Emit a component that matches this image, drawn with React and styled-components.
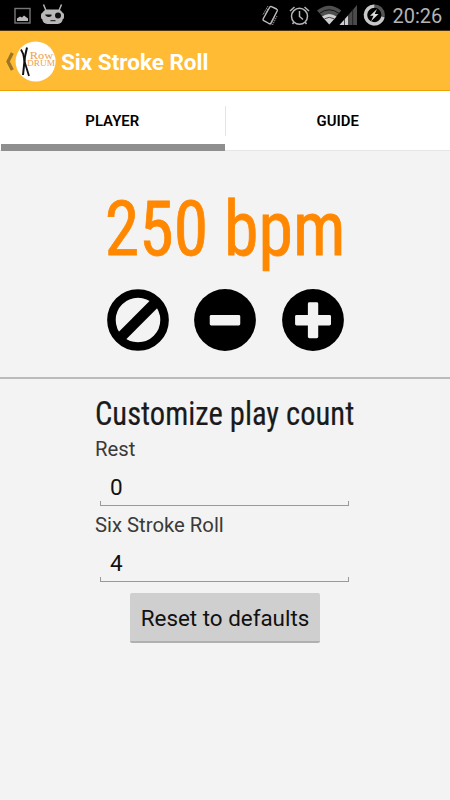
import React from "react";
import styled, { createGlobalStyle } from "styled-components";

const GlobalStyle = createGlobalStyle`
  * {
    box-sizing: border-box;
  }
  body {
    margin: 0;
    background: #f3f3f3;
    font-family: Roboto, "Liberation Sans", sans-serif;
  }
`;
const Screen = styled.div`
  width: 450px;
  height: 800px;
  display: flex;
  flex-direction: column;
  overflow: hidden;
  background: #f3f3f3;
`;
const StatusBar = styled.div`
  height: 31px;
  flex: none;
  display: flex;
  background: #000;
  border-bottom: 1px solid #4b3510;
`;
const Clock = styled.div`
  margin-left: 6.5px;
  font-size: 20px;
  line-height: 32px;
  color: #b4b4b4;
`;
const AppBar = styled.header`
  height: 60px;
  flex: none;
  display: flex;
  align-items: center;
  background: #ffbb33;
  border-bottom: 1px solid #f0a000;
`;
const Title = styled.h1`
  margin: 2px 0 0 5px;
  font-size: 22.5px;
  line-height: 28px;
  font-weight: 700;
  white-space: nowrap;
  color: #fff;
`;
const Tabs = styled.nav`
  height: 60px;
  flex: none;
  display: flex;
  align-items: flex-start;
  background: #fff;
  border-bottom: 1px solid #e6e6e6;
`;
const Tab = styled.div`
  width: 225px;
  height: 60px;
  font-size: 14.9px;
  line-height: 61px;
  font-weight: 600;
  text-align: center;
  color: #000;
  background: ${(p) =>
    p.$active
      ? "linear-gradient(#8f8f8f, #8f8f8f) 1px 53px / 224px 7px no-repeat"
      : "none"};
`;
const TabDivider = styled.div`
  width: 1px;
  height: 30px;
  margin-top: 15px;
  background: #e4e4e4;
`;
const Player = styled.section`
  height: 228px;
  flex: none;
  padding-top: 40px;
  display: flex;
  flex-direction: column;
  align-items: center;
  border-bottom: 2px solid #bbb;
`;
const Bpm = styled.div`
  font-size: 76px;
  line-height: 76px;
  font-weight: 400;
  font-stretch: 75%;
  white-space: nowrap;
  color: #ff8800;
  -webkit-text-stroke: 0.8px #ff8800;
  transform: scaleX(0.918);
`;
const Controls = styled.div`
  margin-top: 22px;
  display: flex;
  gap: 25.5px;
`;
const RoundButton = styled.button`
  width: 62px;
  height: 62px;
  padding: 0;
  border: 0;
  background: none;
  svg {
    display: block;
  }
`;
const Customize = styled.section`
  padding: 15px 0 0 95px;
  display: flex;
  flex-direction: column;
  align-items: flex-start;
`;
const Heading = styled.h2`
  margin: 0 0 3px;
  font-size: 33px;
  line-height: 40px;
  font-weight: 400;
  font-stretch: 75%;
  white-space: nowrap;
  color: #1a1a1a;
  -webkit-text-stroke: 0.2px #1a1a1a;
  transform: scaleX(0.927);
  transform-origin: left;
`;
const Label = styled.label`
  height: 24px;
  font-size: 20.3px;
  line-height: 25px;
  color: #3a3a3a;
`;
const Field = styled.div`
  width: 249px;
  height: 45px;
  margin: 0 0 7px 5px;
  padding: 0 10px;
  display: flex;
  flex-direction: column;
  justify-content: flex-end;
  font-size: 22.5px;
  line-height: 38px;
  color: #111;
  background:
    linear-gradient(#999, #999) 0 100% / 100% 1px no-repeat,
    linear-gradient(#999, #999) 0 100% / 1px 5px no-repeat,
    linear-gradient(#999, #999) 100% 100% / 1px 5px no-repeat;
`;
const ResetButton = styled.button`
  width: 190px;
  height: 50px;
  margin: 4px 0 0 35px;
  padding: 2px 0 0;
  border: 0;
  border-bottom: 2px solid #b0b0b0;
  border-radius: 2px;
  background: #cfcfcf;
  font-family: inherit;
  font-size: 22.4px;
  white-space: nowrap;
  color: #111;
`;

function StatusIcons() {
  return (
    <svg width="386" height="30" viewBox="0 0 386 30">
      {/* picture */}
      <rect x="15" y="8.500" width="15" height="14.500" fill="none" stroke="#777" strokeWidth="1.400" />
      <path d="M17 21v-2.500l3-2 2 1 2-2 4 3V21z" fill="#bbb" />
      {/* android head */}
      <path d="M43.500 4.500l2.500 6M61.500 4.500l-2.500 6" stroke="#b5b5b5" strokeWidth="1.500" />
      <rect x="42.300" y="9.500" width="20.400" height="14.500" rx="5" fill="#b8b8b8" />
      <rect x="41" y="12.500" width="23" height="7" rx="2.500" fill="#b8b8b8" />
      <circle cx="58" cy="15.500" r="3" fill="#111" />
      <path d="M45 14.500h6.500v1.500q-3 2-5.500 0z" fill="#111" />
      <path d="M50.500 20.700h5" stroke="#111" strokeWidth="1" />
      {/* rotating phone */}
      <path d="M269.500 7.500q.7-1.500 2-.8l5 2.300q1.300.7.700 2l-6.200 11.800q-.8 1.300-2 .7l-5.200-2.800q-1.200-.7-.6-2z" fill="none" stroke="#c0c0c0" strokeWidth="1.400" />
      <path d="M263 14.500l5-8.500M265 14l3.500-6M277 16l-4.500 9M274.500 17.500l-4 8" fill="none" stroke="#999" strokeWidth="1" strokeDasharray="1.500 .7" />
      {/* alarm */}
      <circle cx="299.500" cy="16.300" r="8" fill="none" stroke="#b5b5b5" strokeWidth="1.500" />
      <path d="M299.500 11v5.500l3.500 3M290 11l4.500-4M309 11l-4.500-4M294 22l-1.500 2M305 22l1.500 2" fill="none" stroke="#b5b5b5" strokeWidth="1.500" />
      {/* wifi */}
      <path d="M317 10.500q12.300-9.500 24.300 0L329.300 24z" fill="#505050" />
      <path d="M319.500 13.400q9.800-7.200 19.500 0" fill="none" stroke="#111" strokeWidth="1" />
      <path d="M322 16.400q7.200-5 14.600 0L329.300 24.500z" fill="#cfcfcf" />
      <path d="M324.500 18.800q4.800-3 9.600 0" fill="none" stroke="#444" />
      {/* signal */}
      <path d="M357 5v20h-17.500z" fill="#4b4b4b" />
      <path d="M348.500 15v10h-9z" fill="#cfcfcf" />
      <path d="M344.500 18v7M348.700 14v11M352.700 9v16" stroke="#111" strokeWidth=".7" />
      {/* battery ring */}
      <circle cx="374.300" cy="15" r="8.900" fill="none" stroke="#555" strokeWidth="3.400" />
      <path d="M374.300 6.100A8.900 8.900 0 1 0 383 17" fill="none" stroke="#c8c8c8" strokeWidth="3.400" />
      <path d="M377 9l-7 6.800h3.500l-2.500 5.500 7.500-7.200h-3.800z" fill="#ddd" />
    </svg>
  );
}

function Logo() {
  return (
    <svg width="56" height="58" viewBox="0 31 56 58">
      <path d="M12.300 52L8 60.500l4.300 8.500" fill="none" stroke="#9b7425" strokeWidth="3.200" />
      <circle cx="35.600" cy="60.500" r="20" fill="#fff" />
      <path d="M21 48.500l2.200 4.500 1.500 8 4.300 14" fill="none" stroke="#111" strokeWidth="1.800" />
      <path d="M27 46.500l-2 9-1 9-1 9.500" fill="none" stroke="#111" strokeWidth="2" />
      <g fill="#f0a04a" fontFamily="Liberation Serif, serif">
        <text x="29.800" y="57.800" fontSize="10.500" textLength="23.500" lengthAdjust="spacingAndGlyphs">Row</text>
        <text x="27" y="65" fontSize="9" textLength="28" lengthAdjust="spacingAndGlyphs">DRUM</text>
      </g>
    </svg>
  );
}

function ControlIcon({ type }) {
  if (type === "stop") {
    return (
      <svg width="62" height="62" viewBox="0 0 63 63">
        <circle cx="31.500" cy="31.500" r="27" fill="none" stroke="#000" strokeWidth="8.700" />
        <path d="M14 49l35-35" stroke="#000" strokeWidth="10.500" />
      </svg>
    );
  }
  return (
    <svg width="62" height="62" viewBox="0 0 63 63">
      <circle cx="31.500" cy="31.500" r="31.400" fill="#000" />
      {type === "minus" ? (
        <rect x="16" y="26.500" width="31" height="10.500" rx="1.500" fill="#f3f3f3" />
      ) : (
        <g fill="#f3f3f3">
          <rect x="13.300" y="26.500" width="36.500" height="10.500" rx="1.500" />
          <rect x="26.300" y="13.500" width="10.500" height="36.500" rx="1.500" />
        </g>
      )}
    </svg>
  );
}

function App() {
  const counts = [
    { name: "Rest", value: 0 },
    { name: "Six Stroke Roll", value: 4 },
  ];

  return (
    <Screen>
      <GlobalStyle />
      <StatusBar>
        <StatusIcons />
        <Clock>20:26</Clock>
      </StatusBar>
      <AppBar>
        <Logo />
        <Title>Six Stroke Roll</Title>
      </AppBar>
      <Tabs>
        <Tab $active>PLAYER</Tab>
        <TabDivider />
        <Tab>GUIDE</Tab>
      </Tabs>
      <Player>
        <Bpm>250 bpm</Bpm>
        <Controls>
          {["stop", "minus", "plus"].map((type) => (
            <RoundButton key={type} aria-label={type}>
              <ControlIcon type={type} />
            </RoundButton>
          ))}
        </Controls>
      </Player>
      <Customize>
        <Heading>Customize play count</Heading>
        {counts.map((count) => (
          <React.Fragment key={count.name}>
            <Label>{count.name}</Label>
            <Field>{count.value}</Field>
          </React.Fragment>
        ))}
        <ResetButton>Reset to defaults</ResetButton>
      </Customize>
    </Screen>
  );
}

export default App;
